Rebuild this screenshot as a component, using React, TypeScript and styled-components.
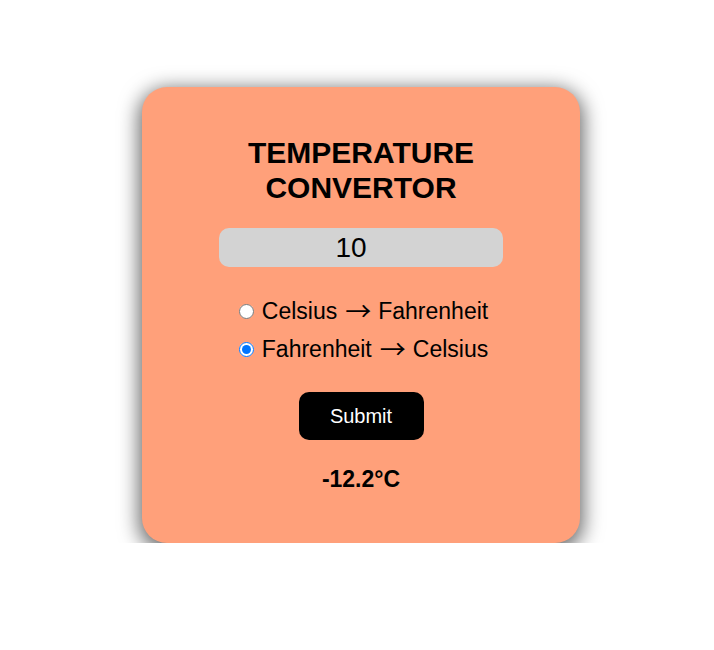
import { useState } from "react";
import styled, { createGlobalStyle } from "styled-components";

const GlobalStyle = createGlobalStyle`
  body {
    margin: 0;
    background: #fff;
    font-family: "Liberation Sans", Arial, sans-serif;
  }
`;

const Page = styled.div`
  display: flex;
  justify-content: center;
  padding: 87px 0 0 8px;
`;

const Card = styled.div`
  box-sizing: border-box;
  width: 438px;
  height: 456px;
  padding: 49px 20px 0;
  background: #ffa07a;
  border-radius: 25px;
  box-shadow: 0 5px 20px 3px rgba(0, 0, 0, 0.6);
  display: flex;
  flex-direction: column;
  align-items: center;
`;

const Title = styled.h1`
  margin: 0;
  font-size: 30px;
  line-height: 34.5px;
  font-weight: bold;
  text-align: center;
  width: 260px;
`;

const NumberInput = styled.input`
  box-sizing: border-box;
  margin-top: 23px;
  padding: 0 20px 0 0;
  width: 284px;
  height: 39px;
  border: none;
  border-radius: 10px;
  background: #d3d3d3;
  font-family: "Liberation Sans", Arial, sans-serif;
  font-size: 28px;
  text-align: center;
  outline: none;
`;

const Options = styled.div`
  margin-top: 30px;
  display: flex;
  flex-direction: column;
  gap: 12px;
`;

const Option = styled.label`
  display: block;
  height: 26px;
  line-height: 26px;
  font-size: 23px;
  white-space: nowrap;
  cursor: pointer;

  input {
    margin: 0 8px 0 5px;
    width: 15px;
    height: 15px;
    vertical-align: 0;
  }
`;

const Arrow = styled.span`
  margin: 0 7px 0 8px;
  font-family: "Noto Sans CJK JP", sans-serif;
  font-size: 26px;
  line-height: 1;
  vertical-align: -2px;
`;

const SubmitButton = styled.button`
  margin-top: 31px;
  width: 125px;
  height: 48px;
  border: none;
  border-radius: 10px;
  background: #000;
  color: #fff;
  font-family: "Liberation Sans", Arial, sans-serif;
  font-size: 20px;
  cursor: pointer;
`;

const Result = styled.div`
  margin-top: 26px;
  font-size: 23px;
  font-weight: bold;
`;

type Mode = "c2f" | "f2c";

export default function App() {
  const [value, setValue] = useState("10");
  const [mode, setMode] = useState<Mode>("f2c");
  const [result, setResult] = useState("-12.2°C");

  const convert = () => {
    const n = parseFloat(value);
    if (isNaN(n)) return setResult("");
    if (mode == "c2f") setResult(((n * 9) / 5 + 32).toFixed(1) + "°F");
    else setResult((((n - 32) * 5) / 9).toFixed(1) + "°C");
  };

  return (
    <>
      <GlobalStyle />
      <Page>
        <Card>
          <Title>TEMPERATURE CONVERTOR</Title>
          <NumberInput
            type="text"
            value={value}
            onChange={(e) => setValue(e.target.value)}
          />
          <Options>
            <Option>
              <input
                type="radio"
                name="mode"
                checked={mode == "c2f"}
                onChange={() => setMode("c2f")}
              />
              Celsius<Arrow>→</Arrow>Fahrenheit
            </Option>
            <Option>
              <input
                type="radio"
                name="mode"
                checked={mode == "f2c"}
                onChange={() => setMode("f2c")}
              />
              Fahrenheit<Arrow>→</Arrow>Celsius
            </Option>
          </Options>
          <SubmitButton onClick={convert}>Submit</SubmitButton>
          <Result>{result}</Result>
        </Card>
      </Page>
    </>
  );
}
